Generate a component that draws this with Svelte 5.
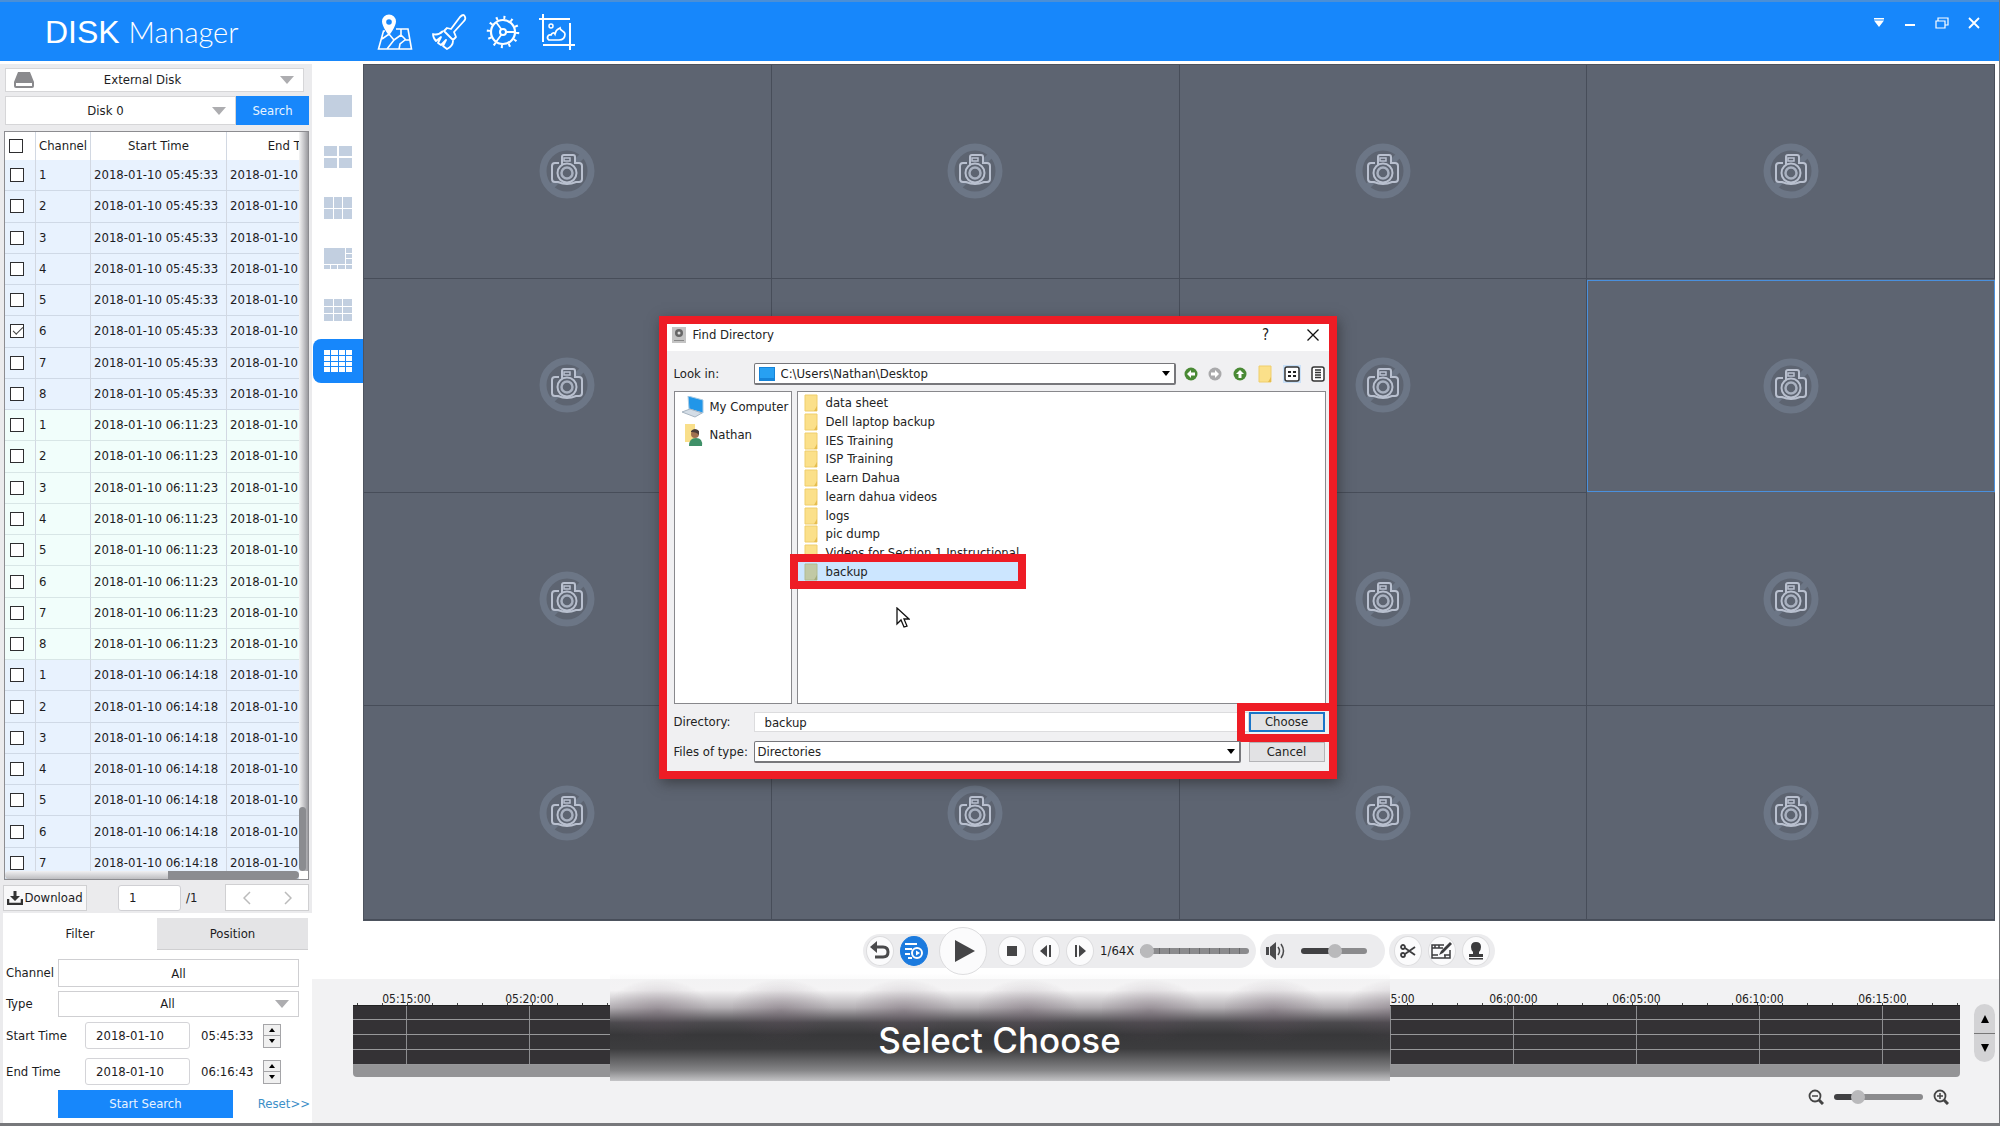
<script>
  const batches = [
    { time: '05:45:33', tone: 'blue', count: 8 },
    { time: '06:11:23', tone: 'mint', count: 8 },
    { time: '06:14:18', tone: 'blue', count: 7 }
  ];
  const rows = batches.flatMap((b, bi) =>
    Array.from({ length: b.count }, (_, i) => ({
      channel: i + 1,
      start: `2018-01-10 ${b.time}`,
      end: '2018-01-10',
      tone: b.tone,
      checked: bi === 0 && i === 5
    }))
  );
  const folders = [
    'data sheet', 'Dell laptop backup', 'IES Training', 'ISP Training', 'Learn Dahua',
    'learn dahua videos', 'logs', 'pic dump', 'Videos for Section 1 Instructional', 'backup'
  ];
  const cells = Array.from({ length: 16 }, (_, i) => i);
  const marks = Array.from({ length: 13 }, (_, i) => {
    const m = 315 + i * 5;
    return `${String(Math.floor(m / 60)).padStart(2, '0')}:${String(m % 60).padStart(2, '0')}:00`;
  });
  const grids = [
    { name: 'Single view', cols: 1, n: 1 },
    { name: '4 views', cols: 2, n: 4 },
    { name: '6 views', cols: 3, n: 6 },
    { name: '8 views', cols: 0, n: 0 },
    { name: '9 views', cols: 3, n: 9 },
    { name: '16 views', cols: 4, n: 16 }
  ];
</script>

{#snippet folder()}
  <svg class="folder" width="14" height="18" viewBox="0 0 14 18"><path d="M1 1h12v16H1z" fill="#fbe08a" stroke="#efce6c" /><path d="M13 12v5h-3z" fill="#e6bd4e" /></svg>
{/snippet}

<div class="app">
  <header>
    <h1>DISK <span>Manager</span></h1>
    <nav>
      <button aria-label="Map"><svg width="36" height="36" viewBox="0 0 36 36" fill="none" stroke="#fff" stroke-width="1.6"><path d="M8 17H6.5L1.5 35H34.5L31 15H19M5 25l7-5 5 6-7 9M17 26l7-5v-6M22 35l1-5 5-4h5M24 21l5 5" /><path d="M12 0.5a7 7 0 0 0-7 7c0 5 7 14 7 14s7-9 7-14a7 7 0 0 0-7-7z" fill="#fff" stroke="none" /><circle cx="12" cy="8" r="2.8" fill="#1787fb" stroke="none" /></svg></button>
      <button aria-label="Clean"><svg width="36" height="36" viewBox="0 0 36 36" fill="none" stroke="#fff" stroke-width="1.8" stroke-linejoin="round"><path d="M16 14l4 1L29 3q4-4 5 0 1 2-1 4L23 18l2 5-3 3-9-9z" /><path d="M12 17C9 20 5 21 2 20c0 3 1 5 3 7l5-4-3 6 3 2 5-5-3 6 4 3c4-2 6-4 6-8" /></svg></button>
      <button aria-label="Settings"><svg width="36" height="36" viewBox="0 0 36 36" fill="none" stroke="#fff"><circle cx="18" cy="18" r="12" stroke-width="2.2" /><circle cx="18" cy="18" r="14.5" stroke-width="3.5" stroke-dasharray="2 5.59" /><circle cx="18" cy="18" r="3" stroke-width="2" /><path d="M21 18h9M16.5 15.5L11 8M16.5 20.500L11 28" stroke-width="1.8" /></svg></button>
      <button aria-label="Snapshot"><svg width="36" height="36" viewBox="0 0 36 36" fill="none" stroke="#fff" stroke-width="2"><path d="M4 0v28M0 5h31M31 9v27M4 31h32" /><circle cx="12" cy="12" r="2" stroke-width="1.5" /><path d="M10 26c-3-2-1-6 2-5 1-2 3-3 4-1 1-5 3-5 5-6 0 3 5 3 5 6 0 6-4 6-6 6z" stroke-width="1.7" /></svg></button>
    </nav>
    <div class="win">
      <button aria-label="Menu"><svg width="12" height="12" viewBox="0 0 12 12" fill="#fff"><path d="M1 1h10v1.500H1zM1 3.500h10L6 10z" /></svg></button>
      <button aria-label="Minimize"><svg width="12" height="12" viewBox="0 0 12 12"><path d="M1 8h10" stroke="#fff" stroke-width="2" /></svg></button>
      <button aria-label="Restore"><svg width="14" height="12" viewBox="0 0 14 12" fill="none" stroke="#fff" stroke-width="1.2"><path d="M1 4h9v7H1zM3 4V1h10v7h-3" /></svg></button>
      <button aria-label="Close"><svg width="12" height="12" viewBox="0 0 12 12"><path d="M1 1l10 10M11 1L1 11" stroke="#fff" stroke-width="1.8" /></svg></button>
    </div>
  </header>

  <div class="body">
    <aside>
      <div class="select source">
        <svg class="drive" width="20" height="16" viewBox="0 0 20 16"><path d="M4 0h12l4 10v4q0 2-2 2H2q-2 0-2-2v-4z" fill="#8a8a8d" /><path d="M2 11h16v3H2z" fill="#fff" /></svg>
        <select aria-label="Disk source"><option>External Disk</option></select>
        <svg class="tri" width="14" height="8" viewBox="0 0 14 8"><path d="M0 0h14L7 8z" /></svg>
      </div>
      <div class="diskrow">
        <div class="select">
          <select aria-label="Disk"><option>Disk 0</option></select>
          <svg class="tri" width="14" height="8" viewBox="0 0 14 8"><path d="M0 0h14L7 8z" /></svg>
        </div>
        <button class="primary">Search</button>
      </div>

      <div class="tablebox">
        <div class="clip">
          <table>
            <thead><tr><th><input type="checkbox" aria-label="Select all" /></th><th>Channel</th><th>Start Time</th><th>End Time</th></tr></thead>
            <tbody>
              {#each rows as r}
                <tr class={r.tone}>
                  <td><input type="checkbox" checked={r.checked} aria-label={`Select channel ${r.channel}`} /></td>
                  <td>{r.channel}</td><td>{r.start}</td><td>{r.end}</td>
                </tr>
              {/each}
            </tbody>
          </table>
        </div>
        <div class="vbar"><i></i></div>
        <div class="hbar"><i></i></div>
      </div>

      <div class="pager">
        <button class="download"><svg width="16" height="14" viewBox="0 0 16 14"><path d="M1 8v5h14V8" fill="none" stroke="#333" stroke-width="2.5" /><path d="M6.5 0h3v5H13L8 10 3 5h3.5z" fill="#333" /></svg>Download</button>
        <input type="text" value="1" aria-label="Page" />
        <span>/1</span>
        <div class="prevnext">
          <button aria-label="Previous page"><svg width="8" height="14" viewBox="0 0 8 14"><path d="M7 1L1 7l6 6" /></svg></button>
          <button aria-label="Next page"><svg width="8" height="14" viewBox="0 0 8 14"><path d="M1 1l6 6-6 6" /></svg></button>
        </div>
      </div>

      <div class="filter">
        <div class="tabs"><button class="on">Filter</button><button>Position</button></div>
        <div class="field first"><label for="ch">Channel</label><input id="ch" class="all" type="text" value="All" /></div>
        <div class="field">
          <label for="ty">Type</label>
          <div class="select"><select id="ty"><option>All</option></select><svg class="tri" width="14" height="8" viewBox="0 0 14 8"><path d="M0 0h14L7 8z" /></svg></div>
        </div>
        {#each [['Start Time', '05:45:33'], ['End Time', '06:16:43']] as [name, time], i}
          <div class="when">
            <label for={`d${i}`}>{name}</label>
            <input id={`d${i}`} type="text" value="2018-01-10" />
            <span>{time}</span>
            <div class="spin">
              <button aria-label={`${name} up`}><svg width="6" height="4" viewBox="0 0 6 4"><path d="M0 4h6L3 0z" /></svg></button>
              <button aria-label={`${name} down`}><svg width="6" height="4" viewBox="0 0 6 4"><path d="M0 0h6L3 4z" /></svg></button>
            </div>
          </div>
        {/each}
        <div class="go"><button class="primary">Start Search</button><a href="#reset">Reset&gt;&gt;</a></div>
      </div>
    </aside>

    <main>
      <div class="viewer">
        <div class="rail">
          {#each grids as g, i}
            <button class:active={i === 5} aria-label={g.name}>
              {#if g.cols}
                <span class="g{g.n}">{#each { length: g.n } as _}<i></i>{/each}</span>
              {:else}
                <svg width="28" height="22" viewBox="0 0 28 22" fill="#c2cfe0"><path d="M0 0h21v16H0zM22 0h6v5h-6zM22 6h6v4h-6zM22 11h6v5h-6zM0 17h6v4H0zM7 17h6v4H7zM14 17h7v4h-7zM22 17h6v4h-6z" /></svg>
              {/if}
            </button>
          {/each}
        </div>
        <div class="stage">
          {#each cells as c}
            <div class="cell" class:sel={c === 7}>
              <svg width="56" height="56" viewBox="0 0 56 56" fill="none">
                <circle cx="28" cy="28" r="24" stroke="#6c7686" stroke-width="7" />
                <path d="M12 44L44 12" stroke="#6c7686" stroke-width="6" />
                <path d="M20 20h-4q-3 0-3 3v13q0 3 3 3h3q9 4 18 0h3q3 0 3-3V23q0-3-3-3h-4v-6q0-2-2-2h-9q-2 0-2 2v8" fill="#5d6471" stroke="#b9c0cf" stroke-width="2" />
                <path d="M25 15h6v3h-6z" stroke="#b9c0cf" stroke-width="1.5" />
                <circle cx="28" cy="30" r="9.5" fill="#5d6471" stroke="#b9c0cf" stroke-width="2" />
                <circle cx="28" cy="30" r="5.5" stroke="#a9b1c0" stroke-width="2.5" />
              </svg>
            </div>
          {/each}
        </div>
      </div>

      <div class="controls">
        <div class="pill play">
          <button aria-label="Back"><svg width="20" height="20" viewBox="0 0 20 20"><path d="M5 6h8q5 0 5 5t-5 5H5" fill="none" stroke="#4a4a4c" stroke-width="3" /><path d="M0 6l7-6v12z" fill="#4a4a4c" /></svg></button>
          <button class="bluebtn" aria-label="Playlist"><svg width="20" height="20" viewBox="0 0 20 20" fill="none" stroke="#fff" stroke-width="2"><path d="M1 3h12M1 8h7M1 13h5M4 17h4" /><circle cx="13" cy="12" r="5" /><path d="M12 9.500v5l4-2.500z" fill="#fff" stroke="none" /></svg></button>
          <button class="big" aria-label="Play"><svg width="22" height="22" viewBox="0 0 22 22"><path d="M1 0l20 11L1 22z" /></svg></button>
          <button aria-label="Stop"><svg width="12" height="12" viewBox="0 0 12 12"><path d="M1 1h10v10H1z" /></svg></button>
          <button aria-label="Previous frame"><svg width="12" height="12" viewBox="0 0 12 12"><path d="M7 0v12L0 6zM9 0h2v12H9z" /></svg></button>
          <button aria-label="Next frame"><svg width="12" height="12" viewBox="0 0 12 12"><path d="M5 0v12l7-6zM1 0h2v12H1z" /></svg></button>
          <label for="speed">1/64X</label>
          <input id="speed" class="speed" type="range" value="0" />
        </div>
        <div class="pill vol">
          <svg width="20" height="18" viewBox="0 0 20 18"><path d="M0 5h3v8H0zM4 5l6-5v18l-6-5z" fill="#4a4a4c" /><path d="M12 5q3 4 0 8M15 2q5 7 0 14" fill="none" stroke="#4a4a4c" stroke-width="1.5" /></svg>
          <input type="range" class="volume" value="52" aria-label="Volume" />
        </div>
        <div class="pill tools">
          <button aria-label="Cut"><svg width="16" height="16" viewBox="0 0 16 16" fill="none" stroke="#3c3c3e" stroke-width="1.8"><circle cx="3" cy="4" r="2" /><circle cx="3" cy="12" r="2" /><path d="M5 5l10 7M5 11l10-7" /></svg></button>
          <button aria-label="Edit clip"><svg width="22" height="20" viewBox="0 0 22 20" fill="none" stroke="#3c3c3e" stroke-width="1.5"><path d="M13 4H1v13h18V9M1 7h11M1 14h6M4 4v3M8 4v3M13 14h6M14 17v-3" /><path d="M8 14l2-4 9-9 2 2-9 9z" fill="#3c3c3e" stroke="none" /></svg></button>
          <button aria-label="Watermark"><svg width="16" height="18" viewBox="0 0 16 18" fill="#3c3c3e"><path d="M8 0q5 0 5 5 0 3-2 5v2h4v3H1v-3h4v-2Q3 8 3 5q0-5 5-5zM1 16h14v1.500H1z" /></svg></button>
        </div>
      </div>

      <div class="timeline">
        <div class="tl">
          <div class="ruler">{#each marks as m}<span>{m}</span>{/each}</div>
          <div class="tracks"><i></i><i></i><i></i><i></i></div>
          <div class="tscroll"></div>
        </div>
        <div class="updown">
          <button aria-label="Scroll up"><svg width="8" height="8" viewBox="0 0 8 8"><path d="M0 8h8L4 0z" /></svg></button>
          <button aria-label="Scroll down"><svg width="8" height="8" viewBox="0 0 8 8"><path d="M0 0h8L4 8z" /></svg></button>
        </div>
        <div class="zoom">
          <svg width="16" height="16" viewBox="0 0 16 16" fill="none" stroke="#444"><circle cx="7" cy="7" r="5.5" stroke-width="1.8" /><path d="M4 7h6" stroke-width="1.5" /><path d="M11 11l4 4" stroke-width="3" /></svg>
          <input type="range" class="zoomr" value="22" aria-label="Timeline zoom" />
          <svg width="16" height="16" viewBox="0 0 16 16" fill="none" stroke="#444"><circle cx="7" cy="7" r="5.5" stroke-width="1.8" /><path d="M4 7h6M7 4v6" stroke-width="1.5" /><path d="M11 11l4 4" stroke-width="3" /></svg>
        </div>
      </div>
    </main>
  </div>

  <div class="caption">Select Choose</div>

  <div class="dialog" role="dialog" aria-label="Find Directory">
    <div class="title">
      <svg width="14" height="16" viewBox="0 0 14 16"><path d="M0 0h14v16H0z" fill="#c4c4c4" /><circle cx="7" cy="6" r="4" fill="#666" /><circle cx="7" cy="6" r="1.5" fill="#ddd" /><path d="M2 13h10v1H2z" fill="#888" /></svg>
      <h2>Find Directory</h2>
      <button class="help" aria-label="Help">?</button>
      <button aria-label="Close dialog"><svg width="12" height="12" viewBox="0 0 12 12"><path d="M0.5 0.5l11 11M11.5 0.5l-11 11" stroke="#111" stroke-width="1.3" /></svg></button>
    </div>
    <div class="look">
      <label for="look">Look in:</label>
      <div class="combo">
        <svg width="16" height="14" viewBox="0 0 16 14"><path d="M0 0h16v14H0z" fill="#1583d8" /><path d="M1 1h14v10H1z" fill="#27a0f2" /></svg>
        <select id="look"><option>C:\Users\Nathan\Desktop</option></select>
        <svg class="drop" width="8" height="5" viewBox="0 0 8 5"><path d="M0 0h8L4 5z" /></svg>
      </div>
      <div class="navs">
        <button aria-label="Back"><svg width="14" height="14" viewBox="0 0 14 14"><circle cx="7" cy="7" r="6.5" fill="#4a8a35" /><path d="M7 3L3 7l4 4V8.500h4v-3H7z" fill="#fff" /></svg></button>
        <button aria-label="Forward"><svg width="14" height="14" viewBox="0 0 14 14"><circle cx="7" cy="7" r="6.5" fill="#a9a9ab" /><path d="M7 3l4 4-4 4V8.500H3v-3h4z" fill="#fff" /></svg></button>
        <button aria-label="Parent"><svg width="14" height="14" viewBox="0 0 14 14"><circle cx="7" cy="7" r="6.5" fill="#4a8a35" /><path d="M3 7l4-4 4 4H8.500v4h-3V7z" fill="#fff" /></svg></button>
        <button aria-label="New folder">{@render folder()}</button>
        <button class="on" aria-label="List view"><svg width="16" height="16" viewBox="0 0 16 16"><rect x="1" y="1" width="14" height="14" rx="2" fill="#fff" stroke="#333" stroke-width="1.5" /><path d="M4 5h3v2H4zM9 5h3v2H9zM4 9h3v2H4zM9 9h3v2H9z" fill="#222" /></svg></button>
        <button aria-label="Detail view"><svg width="14" height="16" viewBox="0 0 14 16"><rect x="1" y="1" width="12" height="14" rx="2" fill="#fff" stroke="#333" stroke-width="1.5" /><path d="M4 4h6M4 6.500h6M4 9h6M4 11.500h6" stroke="#333" stroke-width="1.5" /></svg></button>
      </div>
    </div>
    <div class="panes">
      <ul class="places">
        <li><svg width="24" height="22" viewBox="0 0 24 22"><path d="M7 0l15 4v13L8 13z" fill="#2196e8" stroke="#aacbe4" /><path d="M1 16l8-3 12 4-7 4z" fill="#d4dde6" stroke="#a8b5c2" /></svg>My Computer</li>
        <li><svg width="24" height="22" viewBox="0 0 24 22"><path d="M4 0h10v18H4z" fill="#f9df8a" /><path d="M8 22q0-8 7-8t6 8z" fill="#3f9068" /><circle cx="14" cy="10" r="4" fill="#a0714f" /><path d="M10 7q4-4 8 0v4q-2-3-8-3z" fill="#4a3d38" /></svg>Nathan</li>
      </ul>
      <ul class="files">
        {#each folders as f}<li class:picked={f === 'backup'}>{@render folder()}{f}</li>{/each}
      </ul>
    </div>
    <div class="form">
      <label for="dir">Directory:</label>
      <input id="dir" type="text" value="backup" />
      <div class="target"><button class="choose">Choose</button></div>
      <label for="kind">Files of type:</label>
      <div class="combo"><select id="kind"><option>Directories</option></select><svg class="drop" width="8" height="5" viewBox="0 0 8 5"><path d="M0 0h8L4 5z" /></svg></div>
      <button class="cancel">Cancel</button>
    </div>
    <svg class="cursor" width="14" height="22" viewBox="0 0 14 22"><path d="M1 1v16l4-4 3 7 3-1-3-7h5z" fill="#fff" stroke="#111" stroke-width="1.3" /></svg>
  </div>
</div>

<style>
  :global(body) { margin: 0; background: #fff; }
  :global(*) { box-sizing: border-box; }
  .app { position: relative; display: flex; flex-direction: column; min-height: 100vh; overflow: hidden; border: solid #77787b; border-width: 0 1px 3px 0; background: #fff; font: 13px/16px "DejaVu Sans Condensed", "DejaVu Sans", sans-serif; color: #1c1c1e; }
  button, input, select { font: inherit; color: inherit; margin: 0; padding: 0; border: 0; background: none; border-radius: 0; min-width: 0; }
  button { display: flex; align-items: center; justify-content: center; }
  select { appearance: none; width: 100%; height: 100%; outline: 0; }
  svg { display: block; flex: none; }
  ul { list-style: none; margin: 0; padding: 0; }

  header { display: flex; align-items: center; height: 61px; padding: 0 19px 0 45px; background: #1787fb; border-top: 2px solid #4b8fd6; color: #fff; }
  h1 { width: 332px; margin: 0; font: 400 32px/40px "Liberation Sans", sans-serif; white-space: nowrap; }
  h1 span { font: 300 29px/40px Lato, sans-serif; }
  nav { display: flex; gap: 18px; }
  .win { display: flex; gap: 19px; margin-left: auto; align-self: flex-start; padding-top: 15px; }

  .body { display: flex; flex: 1; padding-top: 3px; }
  aside { display: flex; flex-direction: column; width: 312px; flex: none; padding: 4px 3px 0 4px; background: #ebebed; }
  .select { position: relative; display: flex; align-items: center; background: #fff; }
  .select select { text-align-last: center; padding-right: 22px; }
  .tri { position: absolute; right: 9px; fill: #adadb0; pointer-events: none; }
  .source { height: 24px; margin: 0 5px 4px 1px; border: 1px solid #d6d6d8; }
  .source select { padding: 0 24px 0 0; }
  .drive { position: absolute; left: 8px; }
  .diskrow { display: flex; height: 29px; margin: 0 0 6px 1px; }
  .diskrow .select { flex: 1; border: 1px solid #d6d6d8; }
  .diskrow .select select { padding-right: 30px; }
  .primary { background: #1787fb; color: #e8f4ff; }
  .diskrow .primary { width: 73px; }

  .tablebox { display: grid; grid-template: 1fr 8px / 1fr 9px; flex: 1; border: 1px solid #8c8c90; background: #fff; }
  .clip { display: flex; overflow: hidden; grid-area: 1 / 1 / 3 / 2; }
  table { display: flex; flex-direction: column; width: 359px; flex: none; }
  tr { display: grid; grid-template-columns: 31px 55px 136px 137px; }
  thead tr { height: 28px; }
  th { font-weight: 400; text-align: center; }
  th, td { display: flex; align-items: center; padding: 0 3px; border-right: 1px solid #d2d8e2; white-space: nowrap; overflow: hidden; }
  th { justify-content: center; padding: 0; }
  th:first-child { justify-content: flex-start; padding-left: 4px; }
  td:first-child { padding-left: 5px; }
  tbody { display: grid; grid-auto-rows: 1fr; flex: 1; }
  td { border-bottom: 1px solid #cfd9e6; background: #e8f2fe; }
  .mint td { background: #f1fefb; border-bottom-color: #d8e6e6; }
  input[type='checkbox'] { appearance: none; width: 14px; height: 14px; border: 1px solid #2e2e30; background: #fff; }
  input[type='checkbox']:checked::after { content: ''; display: block; width: 9px; height: 4px; margin: 2px 0 0 2px; border: solid #444; border-width: 0 0 1px 1px; rotate: -45deg; }
  .vbar { grid-area: 1 / 2; display: flex; align-items: flex-end; background: linear-gradient(90deg, #f4f4f4, #c9c9cc 50%, #9b9b9f); }
  .vbar i { width: 7px; height: 64px; border-radius: 4px; background: #8b8c90; }
  .hbar { grid-area: 2 / 1; display: flex; justify-content: flex-end; background: linear-gradient(#f0f0f2, #bdbdc0); border-radius: 4px; z-index: 1; }
  .hbar i { width: 131px; border-radius: 0 4px 4px 0; background: #8b8c90; }

  .pager { display: flex; align-items: center; height: 33px; padding-top: 2px; }
  .pager button { height: 26px; }
  .download { gap: 1px; width: 84px; margin-left: -1px; border: 1px solid #d0d0d2; background: #f8f8f9; }
  .pager input { width: 63px; height: 26px; margin: 0 5px 0 31px; padding-left: 10px; border: 1px solid #d0d0d4; border-radius: 3px; background: #fff; }
  .prevnext { display: flex; justify-content: space-around; width: 84px; height: 27px; margin-left: auto; border: 1px solid #d0d0d2; background: #fff; fill: none; stroke: #bbb; stroke-width: 1.5; }

  .filter { display: flex; flex-direction: column; margin: 0 -3px 0 -1px; padding-bottom: 5px; background: #fff; }
  .tabs { display: grid; grid-template-columns: 154px 1fr; height: 32px; margin: 5px 4px 9px 0; }
  .tabs button:last-child { background: #e4e4e6; border-bottom: 1px solid #cfcfd1; }
  .field { display: flex; align-items: center; height: 26px; margin: 0 13px 5px 3px; }
  .field.first { height: 28px; margin-bottom: 4px; }
  .field label { width: 52px; flex: none; }
  .all, .field .select { flex: 1; height: 100%; border: 1px solid #cfcfd2; background: #fff; text-align: center; }
  .when { display: flex; align-items: center; height: 27px; margin: 0 0 9px 3px; }
  .when label { width: 79px; }
  .when input { width: 105px; height: 27px; padding-left: 10px; border: 1px solid #d4d4d8; border-radius: 3px; }
  .when span { width: 62px; margin-left: 11px; }
  .spin { display: flex; flex-direction: column; width: 18px; height: 24px; border: 1px solid #a5a5a8; background: #f0f0f0; }
  .spin button { flex: 1; }
  .spin button + button { border-top: 1px solid #a5a5a8; }
  .go { display: flex; align-items: center; justify-content: space-between; padding: 0 2px 0 55px; margin-top: -4px; }
  .go .primary { width: 175px; height: 28px; }
  a { color: #3d8fc8; text-decoration: none; }

  main { display: flex; flex-direction: column; flex: 1; min-width: 0; }
  .viewer { display: flex; flex: 1; padding-right: 4px; }
  .rail { display: flex; flex-direction: column; gap: 7px; width: 51px; padding: 20px 0 0 1px; }
  .rail button { height: 44px; border-radius: 8px 0 0 8px; }
  .rail span { display: grid; gap: 1px; width: 28px; height: 22px; }
  .rail i { background: #c2cfe0; }
  .rail .g4 { grid-template-columns: 1fr 1fr; gap: 2px; }
  .rail .g6, .rail .g9 { grid-template-columns: repeat(3, 1fr); }
  .rail .g16 { grid-template-columns: repeat(4, 1fr); }
  .rail .active { background: #1787fb; }
  .rail .active i { background: #fff; }
  .stage { display: grid; grid-template: repeat(4, 1fr) / repeat(4, 1fr); flex: 1; border: solid #4d535e; border-width: 1px 0 1px 1px; background: #5d6471; }
  .cell { display: grid; place-items: center; border: solid #474d59; border-width: 0 1px 1px 0; }
  .cell.sel { margin: 1px 0; border: 1px solid #4a90dd; }

  .controls { display: flex; align-items: center; justify-content: center; gap: 4px; height: 58px; padding: 2px 4px 0 51px; }
  .pill { display: flex; align-items: center; height: 34px; border-radius: 17px; background: #ececee; }
  .pill button { width: 28px; height: 30px; border-radius: 50%; border: 1px solid #dcdcde; background: #fbfbfc; fill: #454547; }
  .play { width: 393px; padding: 0 7px 0 3px; gap: 6px; }
  .pill .bluebtn { background: #1b7ade; border-color: #1b7ade; }
  .pill .big { width: 48px; height: 48px; margin: 0 5px; }
  .pill .big svg { margin-left: 4px; }
  .play label { width: 34px; white-space: nowrap; }
  .vol { width: 125px; padding: 0 18px 0 6px; gap: 15px; }
  .tools { width: 106px; padding: 0 5px; justify-content: space-between; }
  input[type='range'] { appearance: none; flex: 1; height: 6px; border-radius: 3px; background: #8b8b8d; }
  input[type='range']::-webkit-slider-thumb { appearance: none; width: 14px; height: 14px; border-radius: 50%; background: #b9b9bb; }
  input.speed { background: repeating-linear-gradient(90deg, #8b8b8d 0 9px, #6a6a6c 9px 10px); }
  input.volume { background: linear-gradient(90deg, #414143 50%, #8b8b8d 50%); }

  .timeline { display: grid; grid-template: auto 1fr / 1fr 21px; column-gap: 14px; height: 144px; padding: 11px 4px 0 41px; background: #f2f2f3; }
  .tl { min-width: 0; overflow: hidden; }
  .ruler { display: flex; height: 15px; font-size: 12px; line-height: 18px; color: #222; background: repeating-linear-gradient(90deg, transparent 0 4px, #444 4px 5px, transparent 5px 25px) bottom / 100% 2px no-repeat; }
  .ruler span { width: 123px; flex: none; text-align: center; }
  .ruler span:first-child { margin-left: -8px; }
  .tracks { display: grid; grid-template-rows: repeat(4, 1fr); height: 60px; background: repeating-linear-gradient(90deg, transparent 0 53px, #8d8d90 53px 54px, transparent 54px 123px), #343235; }
  .tracks i { border-bottom: 1px solid #98989a; }
  .tracks i:first-child { border-top: 1px solid #222; }
  .tscroll { height: 12px; border-radius: 0 0 4px 4px; background: #949496; }
  .updown { display: grid; grid-template-rows: 1fr 1fr; height: 58px; margin-top: 14px; border-radius: 11px; background: #d3d3d5; }
  .updown button + button { border-top: 1px solid #777; }
  .zoom { grid-column: 1 / 3; display: flex; align-items: center; justify-content: flex-end; gap: 10px; height: 20px; margin: 10px 46px 0 0; }
  .zoom input { flex: none; width: 89px; }
  input.zoomr { background: linear-gradient(90deg, #414143 20%, #8b8b8d 20%); }

  .caption { position: absolute; left: 50%; bottom: 42px; width: 780px; height: 108px; margin-left: -390px; padding-top: 45px; text-align: center; color: #fff; font: 500 35px/44px Inter, sans-serif; background: radial-gradient(ellipse 52px 32px at 48px 38px, #5d4c5a50, transparent) 0 0 / 123px 108px repeat-x, linear-gradient(#ffffff00, #f4f3f4 16%, #b5b1b5 32%, #4c4a4e 46%, #38383a 57%, #3c3c3e 70%, #858587 90%, #c4c4c6); }

  .dialog { position: absolute; top: 316px; left: 50%; width: 678px; margin-left: -341px; display: flex; flex-direction: column; height: 463px; border: 8px solid #ee1c25; background: #f0f0f2; box-shadow: 2px 4px 12px #2228; color: #222; }
  .title { display: flex; align-items: center; height: 27px; padding: 0 10px 6px 5px; background: #fff; }
  h2 { flex: 1; margin: 0 0 0 7px; font: inherit; }
  .help { width: 12px; margin-right: 35px; font-size: 15px; }
  .look { display: flex; align-items: center; height: 22px; margin: 12px 3px 6px 7px; }
  .look > label { width: 80px; }
  .combo { position: relative; display: flex; align-items: center; flex: 1; height: 22px; padding-left: 4px; border: 1px solid #77777b; border-width: 1px 2px 2px 1px; border-radius: 2px; background: #fff; }
  .combo select { padding-left: 6px; }
  .drop { position: absolute; right: 4px; }
  .navs { display: flex; align-items: center; justify-content: space-between; width: 150px; padding-left: 8px; }
  .navs .on { background: #c9e0f7; padding: 1px; }
  .panes { display: flex; flex: 1; gap: 5px; margin: 0 3px 0 7px; }
  .places, .files { border: 1px solid #88888c; background: #fff; }
  .places { width: 118px; flex: none; padding: 4px 0 0 6px; }
  .places li { display: flex; align-items: center; gap: 5px; height: 22px; margin-bottom: 6px; white-space: nowrap; }
  .files { display: grid; grid-auto-rows: 1fr; flex: 1; padding: 2px 0 122px; }
  .files li { position: relative; display: flex; align-items: center; gap: 8px; width: 220px; padding-left: 6px; white-space: nowrap; }
  .files .picked { background: #cce6ff; }
  .picked::after { content: ''; position: absolute; inset: -8px; border: 8px solid #ee1c25; }
  .picked :global(.folder) { filter: hue-rotate(25deg) brightness(0.88) saturate(0.4); }
  .form { display: grid; grid-template-columns: 80px 1fr 76px; gap: 9px 0; align-items: center; padding: 8px 4px 8px 7px; }
  .form > input { height: 20px; padding-left: 10px; border: 1px solid #dcdcde; background: #fff; }
  .form .combo { height: 22px; margin-right: 8px; padding-left: 0; }
  .form .combo select { padding-left: 3px; }
  .form button { width: 100%; height: 20px; border: 1px solid #b4b4b7; background: #e2e2e4; }
  .form .choose { border: 2px solid #1a74c8; }
  .target { position: relative; }
  .target::after { content: ''; position: absolute; inset: -9px -12px -10px -12px; border: 8px solid #ee1c25; pointer-events: none; }
  .cursor { position: absolute; left: 229px; top: 283px; }
</style>
